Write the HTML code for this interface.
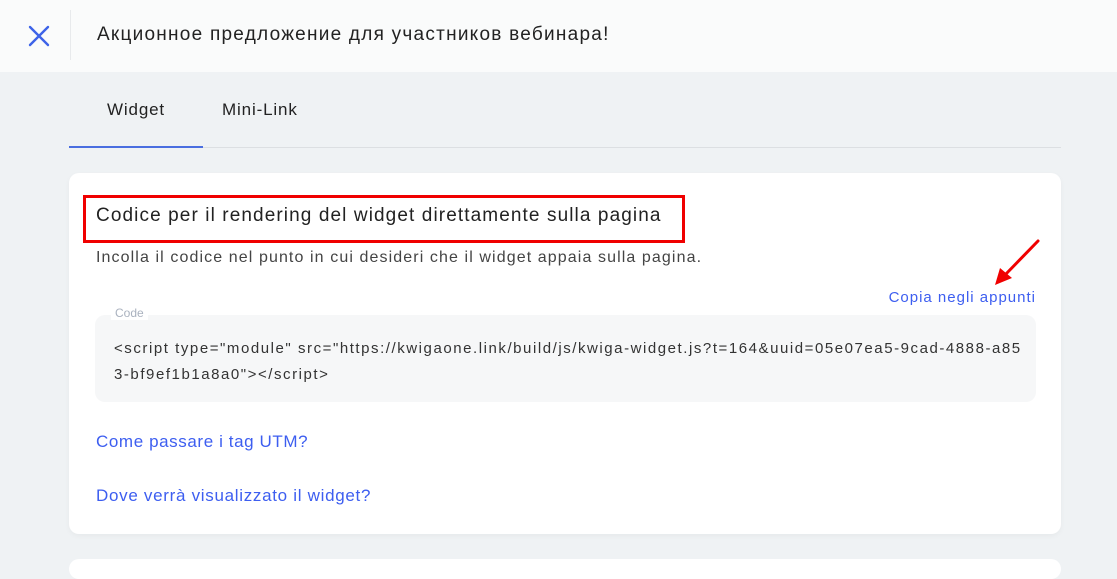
<!DOCTYPE html>
<html><head><style>
*{margin:0;padding:0;box-sizing:border-box}
body{width:1117px;height:562px;overflow:hidden;background:#eff2f4;font-family:"Liberation Sans","Noto Sans CJK SC",sans-serif;color:#222;position:relative}
.hdr{position:absolute;left:0;top:0;width:1117px;height:72px;background:#fafbfb}
.sep{position:absolute;left:70px;top:10px;width:1px;height:50px;background:#e8eaec}
.title{position:absolute;left:97px;top:24px;font-size:19px;color:#222;letter-spacing:1.25px}
.tab{position:absolute;top:100px;font-size:17px;color:#222;letter-spacing:0.85px}
.line{position:absolute;left:69px;top:147px;width:992px;height:1px;background:#dcdfe2}
.act{position:absolute;left:69px;top:146px;width:134px;height:2px;background:#4a6ee0}
.card{position:absolute;left:69px;top:173px;width:992px;height:361px;background:#fff;border-radius:10px;box-shadow:0 2px 6px rgba(0,0,0,.04)}
.card2{position:absolute;left:69px;top:559px;width:992px;height:20px;background:#fff;border-radius:10px}
.red{position:absolute;left:83px;top:195px;width:602px;height:48px;border:3px solid #f00000}
.h{position:absolute;left:96px;top:205px;font-size:19px;color:#222;letter-spacing:1.1px}
.sub{position:absolute;left:96px;top:249px;font-size:16px;color:#444;letter-spacing:1.1px}
.copy{position:absolute;right:81px;top:289px;font-size:15px;color:#3d5ef0;letter-spacing:1px}
.code{position:absolute;left:95px;top:315px;width:941px;height:87px;background:#f6f7f8;border-radius:10px}
.lbl{position:absolute;left:111px;top:306px;font-size:12px;color:#aab2bf;background:#fff;padding:0 4px;border-radius:4px 4px 0 0}
.ct{position:absolute;left:114px;top:336px;font-size:15px;color:#333;line-height:26px;width:930px;letter-spacing:1.55px;white-space:nowrap}
.lnk{position:absolute;left:96px;font-size:17px;color:#3d5ef0}
</style></head><body>
<div class="hdr"></div>
<svg style="position:absolute;left:28px;top:25px" width="22" height="22" viewBox="0 0 22 22"><path d="M2 2L20 20M20 2L2 20" stroke="#3d63e8" stroke-width="2.4" stroke-linecap="round"/></svg>
<div class="sep"></div>
<div class="title">Акционное предложение для участников вебинара!</div>
<div class="tab" style="left:107px">Widget</div>
<div class="tab" style="left:222px">Mini-Link</div>
<div class="line"></div><div class="act"></div>
<div class="card"></div>
<div class="card2"></div>
<div class="red"></div>
<div class="h">Codice per il rendering del widget direttamente sulla pagina</div>
<div class="sub">Incolla il codice nel punto in cui desideri che il widget appaia sulla pagina.</div>
<svg style="position:absolute;left:990px;top:236px" width="55" height="52" viewBox="0 0 55 52"><path d="M48 5L14 40" stroke="#f00000" stroke-width="3" stroke-linecap="round"/><path d="M5 49L10 32L22 42Z" fill="#f00000"/></svg>
<div class="copy">Copia negli appunti</div>
<div class="code"></div>
<div class="lbl">Code</div>
<div class="ct">&lt;script type="module" src="https://kwigaone.link/build/js/kwiga-widget.js?t=164&amp;uuid=05e07ea5-9cad-4888-a85<br>3-bf9ef1b1a8a0"&gt;&lt;/script&gt;</div>
<div class="lnk" style="top:432px;letter-spacing:0.6px">Come passare i tag UTM?</div>
<div class="lnk" style="top:486px;letter-spacing:0.7px">Dove verrà visualizzato il widget?</div>
</body></html>
